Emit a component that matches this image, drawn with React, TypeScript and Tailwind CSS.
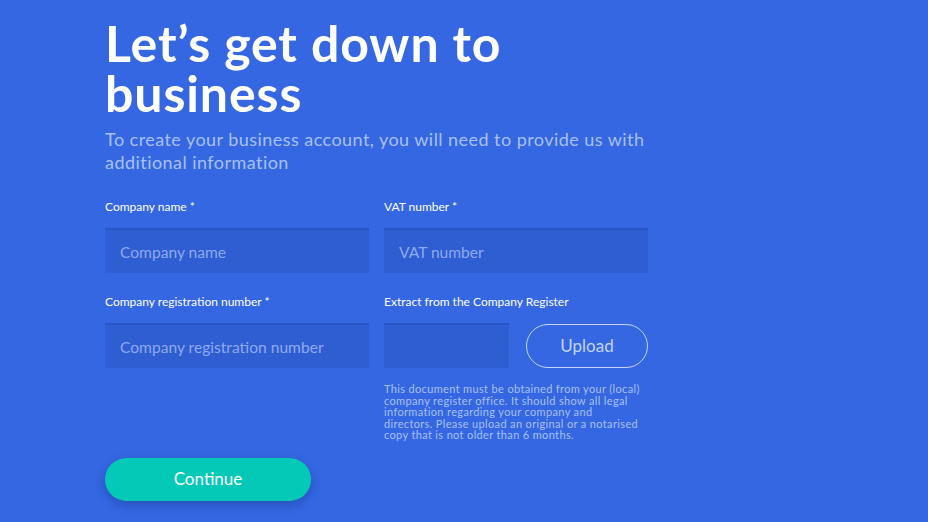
import React from "react";

const Field = ({ label, placeholder }: { label: string; placeholder: string }) => (
  <div className="flex flex-col w-[264px]">
    <label className="text-[12px] text-white leading-[14px] h-[14px] mb-[14px]">{label}</label>
    <input
      placeholder={placeholder}
      className="h-[45px] bg-[#2f5dd2] border-t-2 border-[#2a55c4] px-[15px] text-[15.6px] text-white placeholder:text-[#8eaaf0] outline-none"
    />
  </div>
);

const App = () => {
  return (
    <div className="w-[928px] h-[522px] bg-[#3467e1] overflow-hidden font-['Lato',sans-serif]">
      <div className="pl-[105px] pt-[18px] w-[700px]">
        <h1 className="text-[50px] font-bold text-white leading-[50px] tracking-[0.9px]">
          Let’s get down to
          <br />
          business
        </h1>
        <p className="mt-[10px] text-[18px] leading-[23px] text-[#a8c0f6] w-[560px] tracking-[0.45px]">
          To create your business account, you will need to provide us with additional information
        </p>

        <div className="mt-[26px] grid grid-cols-[264px_264px] gap-x-[15px] gap-y-[22px]">
          <Field label="Company name *" placeholder="Company name" />
          <Field label="VAT number *" placeholder="VAT number" />
          <Field label="Company registration number *" placeholder="Company registration number" />
          <div className="flex flex-col w-[264px]">
            <label className="text-[12px] text-white leading-[14px] h-[14px] mb-[14px]">
              Extract from the Company Register
            </label>
            <div className="flex items-center gap-[17px]">
              <div className="w-[125px] h-[45px] bg-[#2f5dd2] border-t-2 border-[#2a55c4]" />
              <button className="w-[122px] h-[44px] rounded-full border-[1.5px] border-[#c4d3f7] text-[#c4d3f7] text-[17px]">
                Upload
              </button>
            </div>
            <p className="mt-[15px] text-[11px] leading-[11.5px] text-[#a8c0f6] tracking-[0.35px] whitespace-nowrap">
              This document must be obtained from your (local)
              <br />
              company register office. It should show all legal
              <br />
              information regarding your company and
              <br />
              directors. Please upload an original or a notarised
              <br />
              copy that is not older than 6 months.
            </p>
          </div>
        </div>

        <button className="mt-[17px] w-[206px] h-[43px] rounded-full bg-[#04c9b6] text-white text-[17px] shadow-[0_4px_10px_rgba(20,40,120,0.35)]">
          Continue
        </button>
      </div>
    </div>
  );
};

export default App;
